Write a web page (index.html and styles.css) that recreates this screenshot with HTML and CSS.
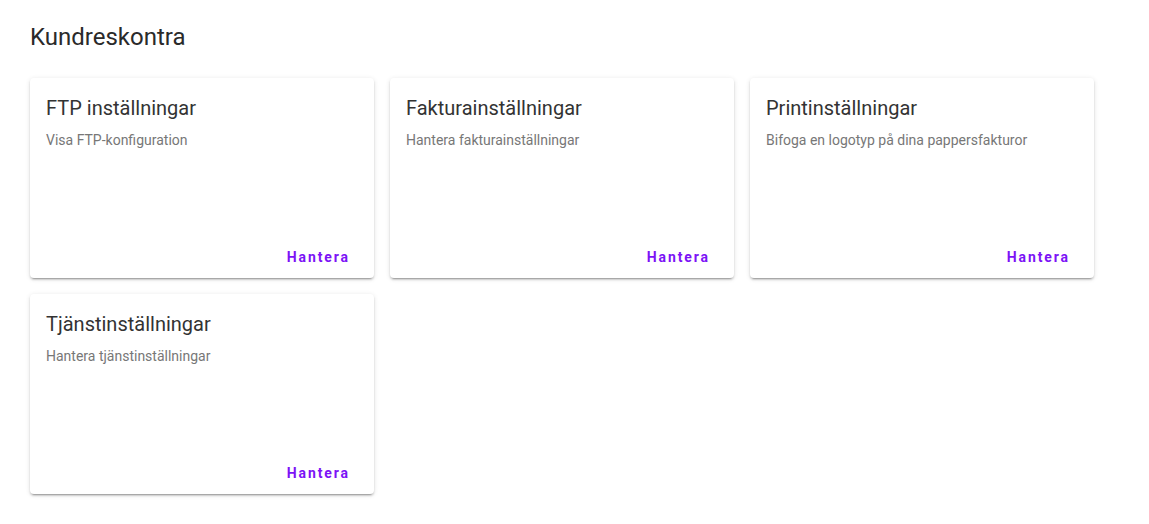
FILE: index.html
```html
<!DOCTYPE html>
<html lang="sv">
<head>
<meta charset="utf-8">
<title>Kundreskontra</title>
<link rel="stylesheet" href="styles.css">
</head>
<body>
<main class="page">
  <h1 class="page-title">Kundreskontra</h1>
  <div class="grid">
    <section class="card">
      <h2 class="card-title">FTP inställningar</h2>
      <p class="card-sub">Visa FTP-konfiguration</p>
      <div class="card-actions"><button class="btn">Hantera</button></div>
    </section>
    <section class="card">
      <h2 class="card-title">Fakturainställningar</h2>
      <p class="card-sub">Hantera fakturainställningar</p>
      <div class="card-actions"><button class="btn">Hantera</button></div>
    </section>
    <section class="card">
      <h2 class="card-title">Printinställningar</h2>
      <p class="card-sub">Bifoga en logotyp på dina pappersfakturor</p>
      <div class="card-actions"><button class="btn">Hantera</button></div>
    </section>
    <section class="card">
      <h2 class="card-title">Tjänstinställningar</h2>
      <p class="card-sub">Hantera tjänstinställningar</p>
      <div class="card-actions"><button class="btn">Hantera</button></div>
    </section>
  </div>
</main>
</body>
</html>
```
FILE: styles.css
```css
* { box-sizing: border-box; }
html, body { margin: 0; background: #fff; }
body {
  font-family: Roboto, "Liberation Sans", sans-serif;
  color: rgba(0,0,0,0.87);
}
.page { padding: 21px 30px; }
.page-title {
  margin: 0 0 25px;
  font-size: 24px;
  line-height: 32px;
  font-weight: 400;
  color: #2a2a2a;
}
.grid {
  display: grid;
  grid-template-columns: repeat(3, 344px);
  gap: 16px;
}
.card {
  height: 200px;
  background: #fff;
  border-radius: 4px;
  box-shadow: 0 3px 1px -2px rgba(0,0,0,.2), 0 2px 2px 0 rgba(0,0,0,.14), 0 1px 5px 0 rgba(0,0,0,.12);
  display: flex;
  flex-direction: column;
  padding-top: 14px;
}
.card-title {
  margin: 0;
  padding: 0 16px;
  font-size: 20px;
  line-height: 32px;
  font-weight: 400;
  color: #333;
}
.card-sub {
  margin: 6px 0 0;
  padding: 0 16px;
  font-size: 14px;
  line-height: 20px;
  color: #777;
}
.card-actions {
  margin-top: auto;
  display: flex;
  justify-content: flex-end;
  padding: 0 8px 3px;
}
.btn {
  height: 36px;
  padding: 0 16px;
  border: 0;
  background: transparent;
  font-family: Roboto, "Liberation Sans", sans-serif;
  font-size: 14px;
  font-weight: 700;
  letter-spacing: 1.9px;
  color: #7c13f6;
  cursor: pointer;
  border-radius: 4px;
}
```
